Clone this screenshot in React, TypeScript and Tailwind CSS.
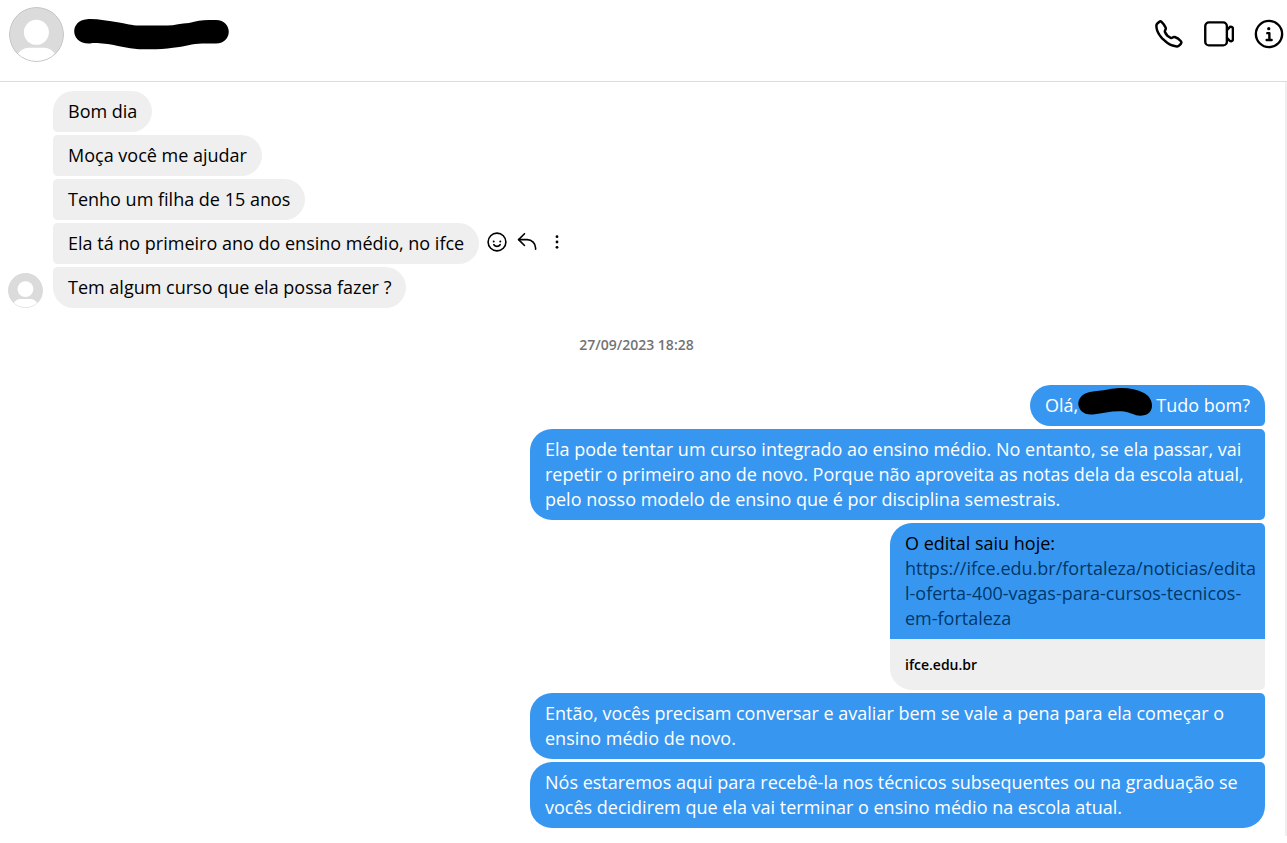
import type { ReactNode } from 'react';
import clsx from 'clsx';

type Position = 'first' | 'middle' | 'last';

type BubbleProps = {
    children: ReactNode;
    position?: Position;
};

const received: { text: string; position: Position; actions?: boolean }[] = [
    { text: 'Bom dia', position: 'first' },
    { text: 'Moça você me ajudar', position: 'middle' },
    { text: 'Tenho um filha de 15 anos', position: 'middle' },
    { text: 'Ela tá no primeiro ano do ensino médio, no ifce', position: 'middle', actions: true },
    { text: 'Tem algum curso que ela possa fazer ?', position: 'last' },
];

function Avatar({ className, borderColor }: { className: string; borderColor: string }) {
    return (
        <svg viewBox="0 0 55 55" className={clsx('shrink-0 rounded-full', className)} aria-hidden="true">
            <circle cx="27.5" cy="27.5" r="27.5" fill="#dbdbdb" />
            <circle cx="27.4" cy="25.3" r="12.5" fill="#fff" />
            <path d="M8.5 47.5q4.5-6.7 11-6.7h16q6.5 0 10.5 6.7Q38 54.5 27.5 54.5T8.5 47.5Z" fill="#fff" />
            <circle cx="27.5" cy="27.5" r="27" fill="none" stroke={borderColor} />
        </svg>
    );
}

function PhoneIcon() {
    return (
        <svg viewBox="0 0 24 24" className="size-[30px]" fill="currentColor" aria-hidden="true">
            <path d="M18.227 22.912c-4.913 0-9.286-3.627-11.486-5.828C4.486 14.83.731 10.291.921 5.231a3.289 3.289 0 0 1 .908-2.138 17.116 17.116 0 0 1 1.865-1.71 2.307 2.307 0 0 1 3.004.174 13.283 13.283 0 0 1 3.658 5.325 2.551 2.551 0 0 1-.19 1.941l-.455.853a.463.463 0 0 0-.024.387 7.57 7.57 0 0 0 4.077 4.075.455.455 0 0 0 .386-.024l.853-.455a2.548 2.548 0 0 1 1.94-.19 13.278 13.278 0 0 1 5.326 3.658 2.309 2.309 0 0 1 .174 3.003 17.319 17.319 0 0 1-1.71 1.866 3.29 3.29 0 0 1-2.138.91 10.27 10.27 0 0 1-.368.006Zm-13.144-20a.27.27 0 0 0-.167.054A15.121 15.121 0 0 0 3.28 4.47a1.289 1.289 0 0 0-.36.836c-.161 4.301 3.21 8.34 5.235 10.364s6.06 5.403 10.366 5.236a1.284 1.284 0 0 0 .835-.36 15.217 15.217 0 0 0 1.504-1.637.324.324 0 0 0-.047-.41 11.62 11.62 0 0 0-4.457-3.119.545.545 0 0 0-.411.044l-.854.455a2.452 2.452 0 0 1-2.071.116 9.571 9.571 0 0 1-5.189-5.188 2.457 2.457 0 0 1 .115-2.071l.456-.855a.544.544 0 0 0 .043-.41 11.629 11.629 0 0 0-3.118-4.458.36.36 0 0 0-.244-.1Z" />
        </svg>
    );
}

function VideoIcon() {
    return (
        <svg
            viewBox="0 0 24 24"
            className="size-[30px]"
            fill="none"
            stroke="currentColor"
            strokeWidth="1.9"
            strokeLinecap="round"
            strokeLinejoin="round"
            aria-hidden="true"
        >
            <rect x="1" y="2.7" width="17.3" height="18.4" rx="3" />
            <path d="m18.5 8.8 1.7-1.9a1.6 1.6 0 0 1 2.9 1.1v8a1.6 1.6 0 0 1-2.9 1.1l-1.7-1.9" />
        </svg>
    );
}

function InfoIcon() {
    return (
        <svg
            viewBox="0 0 24 24"
            className="size-[30px]"
            fill="none"
            stroke="currentColor"
            strokeWidth="1.9"
            strokeLinecap="round"
            strokeLinejoin="round"
            aria-hidden="true"
        >
            <circle cx="12" cy="12" r="10.5" />
            <circle cx="11.8" cy="7.7" r="1.3" fill="currentColor" stroke="none" />
            <path d="M10.6 11.3h1.7v5.5M10.1 16.8h4" />
        </svg>
    );
}

function SmileIcon() {
    return (
        <svg viewBox="0 0 20 20" className="size-5" fill="none" stroke="currentColor" aria-hidden="true">
            <circle cx="10" cy="10" r="8.9" strokeWidth="1.6" />
            <circle cx="6.7" cy="9.4" r="1" fill="currentColor" stroke="none" />
            <circle cx="13.3" cy="9.4" r="1" fill="currentColor" stroke="none" />
            <path d="M6.9 12.7a3.7 3.7 0 0 0 6.2 0" strokeWidth="1.7" strokeLinecap="round" />
        </svg>
    );
}

function ReplyIcon() {
    return (
        <svg
            viewBox="0 0 20 20"
            className="size-5"
            fill="none"
            stroke="currentColor"
            strokeWidth="1.6"
            strokeLinecap="round"
            strokeLinejoin="round"
            aria-hidden="true"
        >
            <path d="M7.5 1.7 1.6 7.6l5.9 5.9" />
            <path d="M1.6 7.6h8.6a8.4 8.4 0 0 1 8.4 8.4v1.2" />
        </svg>
    );
}

function MoreIcon() {
    return (
        <svg viewBox="0 0 20 20" className="size-5" fill="currentColor" aria-hidden="true">
            <circle cx="10" cy="4.7" r="1.4" />
            <circle cx="10" cy="10" r="1.4" />
            <circle cx="10" cy="15.3" r="1.4" />
        </svg>
    );
}

function ReceivedBubble({ children, position = 'middle' }: BubbleProps) {
    return (
        <p
            className={clsx(
                'rounded-r-[22px] bg-[#efefef] px-[15px] py-2 text-black',
                position === 'first' && 'rounded-tl-[22px] rounded-bl-[5px]',
                position === 'middle' && 'rounded-l-[5px]',
                position === 'last' && 'rounded-tl-[5px] rounded-bl-[22px]'
            )}
        >
            {children}
        </p>
    );
}

function SentBubble({ children, position = 'middle' }: BubbleProps) {
    return (
        <p
            className={clsx(
                'max-w-[735px] rounded-l-[22px] bg-[#3797f0] px-[15px] py-2 text-white',
                position === 'first' && 'rounded-tr-[22px] rounded-br-[5px]',
                position === 'middle' && 'rounded-r-[5px]',
                position === 'last' && 'rounded-tr-[5px] rounded-br-[22px]'
            )}
        >
            {children}
        </p>
    );
}

export default function App() {
    return (
        <div className="flex min-h-screen flex-col bg-white font-['Open_Sans','Noto_Sans',sans-serif] text-lg leading-[25px] text-black">
            <header className="flex items-start justify-between border-b border-[#dbdbdb] pt-[7px] pr-[3px] pb-[19px] pl-[9px]">
                <div className="flex items-start gap-[10px]">
                    <Avatar className="size-[55px]" borderColor="#c4c4c4" />
                    <svg viewBox="0 0 156 32" className="mt-[11px] h-8 w-[156px]" aria-hidden="true">
                        <path
                            d="M13 1.2C22 .5 33 2.8 45 4.5c8 1.2 12 3 20 3h28c8 0 14-2.2 22-2.5 8-2 14-3.2 22-2.9h5c17 0 17 23.4 0 23.4h-13c-10-.2-18 3.3-30 4.2-10 1.7-20 1.8-34 1.5-12-.5-22-4.1-34-5.4-7-.8-11-.9-15-.3C-4 26.5-5 2.5 13 1.2Z"
                            fill="#000"
                        />
                    </svg>
                </div>
                <div className="flex gap-5 pt-3">
                    <button type="button" aria-label="Ligar">
                        <PhoneIcon />
                    </button>
                    <button type="button" aria-label="Chamada de vídeo">
                        <VideoIcon />
                    </button>
                    <button type="button" aria-label="Informações">
                        <InfoIcon />
                    </button>
                </div>
            </header>

            <main className="mb-[7px] flex grow flex-col border-r-2 border-[#efefef] pt-[9px] pr-5 pb-2 pl-2">
                <section className="flex items-end gap-[10px]">
                    <Avatar className="size-[35px]" borderColor="#dbdbdb" />
                    <div className="flex flex-col items-start gap-[3px]">
                        {received.map(({ text, position, actions }) => (
                            <div key={text} className="flex items-center gap-2">
                                <ReceivedBubble position={position}>{text}</ReceivedBubble>
                                {actions ? (
                                    <div className="flex gap-[10px] pb-[3px]">
                                        <button type="button" aria-label="Reagir">
                                            <SmileIcon />
                                        </button>
                                        <button type="button" aria-label="Responder">
                                            <ReplyIcon />
                                        </button>
                                        <button type="button" aria-label="Mais">
                                            <MoreIcon />
                                        </button>
                                    </div>
                                ) : null}
                            </div>
                        ))}
                    </div>
                </section>

                <time className="pt-6 pb-7 text-center text-sm leading-[25px] font-semibold text-[#737373]">
                    27/09/2023 18:28
                </time>

                <section className="flex flex-col items-end gap-[3px]">
                    <SentBubble position="first">
                        <span className="flex">
                            Olá,
                            <svg viewBox="0 0 74 30" className="-mt-[6px] mr-1 h-[30px] w-[74px]" aria-hidden="true">
                                <path
                                    d="M12 5C18 3.5 24 4 30 2.5 42-.2 56 .6 66 6c11 6 10 20 1 22-9 2.5-13-2.6-21-3.5-11-1-20 1.5-31 3C-3 29-5 8 12 5Z"
                                    fill="#000"
                                />
                            </svg>
                            Tudo bom?
                        </span>
                    </SentBubble>
                    <SentBubble>
                        Ela pode tentar um curso integrado ao ensino médio. No entanto, se ela passar, vai repetir o
                        primeiro ano de novo. Porque não aproveita as notas dela da escola atual, pelo nosso modelo de
                        ensino que é por disciplina semestrais.
                    </SentBubble>
                    <article className="w-[375px] overflow-hidden rounded-l-[22px] rounded-r-[5px] bg-[#efefef]">
                        <p className="bg-[#3797f0] py-2 pr-[5px] pl-[15px]">
                            O edital saiu hoje:
                            <a
                                href="https://ifce.edu.br/fortaleza/noticias/edital-oferta-400-vagas-para-cursos-tecnicos-em-fortaleza"
                                className="block wrap-break-word text-[#00376b]"
                            >
                                https://ifce.edu.br/fortaleza/noticias/edita
                                <wbr />
                                l-oferta-400-vagas-para-cursos-tecnicos-em-fortaleza
                            </a>
                        </p>
                        <p className="px-[15px] py-[13px] text-sm leading-[25px] font-semibold">ifce.edu.br</p>
                    </article>
                    <SentBubble>
                        Então, vocês precisam conversar e avaliar bem se vale a pena para ela começar o ensino médio de
                        novo.
                    </SentBubble>
                    <SentBubble position="last">
                        Nós estaremos aqui para recebê-la nos técnicos subsequentes ou na graduação se vocês decidirem
                        que ela vai terminar o ensino médio na escola atual.
                    </SentBubble>
                </section>
            </main>
        </div>
    );
}
